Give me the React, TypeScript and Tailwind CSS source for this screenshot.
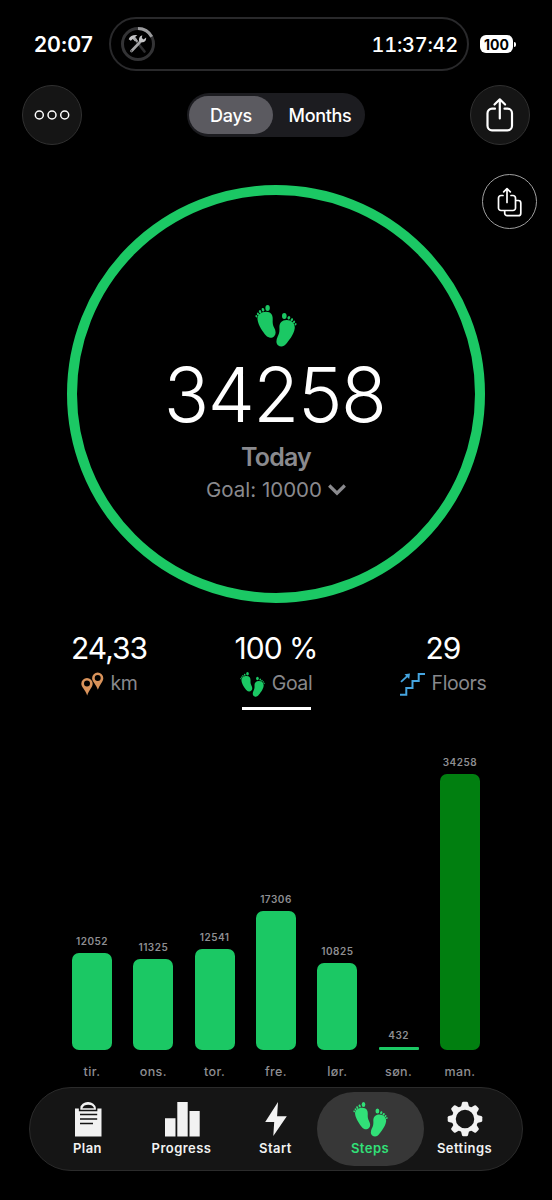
import type { ReactNode } from "react";

const stepsData = [
  { day: "tir.", steps: 12052 },
  { day: "ons.", steps: 11325 },
  { day: "tor.", steps: 12541 },
  { day: "fre.", steps: 17306 },
  { day: "lør.", steps: 10825 },
  { day: "søn.", steps: 432 },
  { day: "man.", steps: 34258 },
];

const maxSteps = 34258;
const maxHeight = 276;

const Feet = ({ className }: { className: string }) => (
  <svg viewBox="0 0 42 42" fill="currentColor" className={className}>
    <path d="M2.500 14.500C1.900 9.600 6.300 6.800 11 6.800c5 0 7 3.400 6.700 7.600-.2 3.800.1 5.600 1.500 8.300 1.700 3.200 2.100 6.300 0 8.500-2.200 2.200-5.900 2.100-8.200-.6C8.300 27.400 3.300 20.600 2.500 14.500Z" />
    <ellipse cx="12.600" cy="3" rx="2.200" ry="3" />
    <ellipse cx="8" cy="4.800" rx="1.300" ry="1.800" transform="rotate(-20 8 4.800)" />
    <ellipse cx="5.100" cy="6.700" rx="1.200" ry="1.600" transform="rotate(-25 5.100 6.700)" />
    <ellipse cx="3" cy="8.900" rx="1" ry="1.400" transform="rotate(-30 3 8.900)" />
    <ellipse cx="1.400" cy="11.200" rx=".9" ry="1.200" transform="rotate(-30 1.400 11.200)" />
    <path d="M39.700 23.400C40.300 18.400 36.600 15.200 31.800 15.100c-5-.1-7.600 3.200-7.400 7.700.2 4.400-.3 5.800-1.700 8.700-1.600 3.400-1.900 6.700.3 8.700 2.300 2 6 1.700 8-1.100 2.200-3.100 7.800-9.200 8.700-15.700Z" />
    <ellipse cx="29.300" cy="10.900" rx="2.300" ry="3" />
    <ellipse cx="33.900" cy="12.800" rx="1.300" ry="1.800" transform="rotate(22 33.900 12.800)" />
    <ellipse cx="36.800" cy="14.700" rx="1.200" ry="1.600" transform="rotate(28 36.800 14.700)" />
    <ellipse cx="39" cy="16.900" rx="1" ry="1.400" transform="rotate(30 39 16.900)" />
    <ellipse cx="40.600" cy="19.300" rx=".9" ry="1.200" transform="rotate(30 40.600 19.300)" />
  </svg>
);

const ToolsIcon = () => (
  <svg viewBox="0 0 36 36" fill="none" className="w-9 h-9">
    <circle cx="18" cy="18" r="15.500" stroke="#333335" strokeWidth="3" />
    <path d="M18 2.500a15.500 15.500 0 0 1 13.700 8.300" stroke="#9b9b9d" strokeWidth="3" />
    <path d="M17 16l7.500 9.500" stroke="#2d2d2f" strokeWidth="2.600" strokeLinecap="round" />
    <path d="M21.500 14.500L11.500 25" stroke="#a5a5a7" strokeWidth="2.600" strokeLinecap="round" />
    <path d="M19.700 15.800c-1.500-2.500-.4-5.600 2.600-6.600l-.5 2.900 1.800 1.300 2.500-2c.5 3.200-2.100 5.900-6.400 4.400Z" fill="#c4c4c6" />
    <path d="M8.700 13.200c1.300-3.600 4.300-4.500 8.600-4.200l-2.200 2 2 2.500-2 1.900-2.300-2.400-2 1.800Z" fill="#c4c4c6" />
    <path d="M14 12l3.500 3.800" stroke="#a5a5a7" strokeWidth="2" />
    <circle cx="11.700" cy="24.900" r=".6" fill="#222" />
  </svg>
);

const MoreIcon = () => (
  <svg viewBox="0 0 36 12" fill="none" stroke="white" strokeWidth="1.500" className="h-3 w-9">
    <circle cx="5.300" cy="6" r="4" />
    <circle cx="18" cy="6" r="4" />
    <circle cx="30.700" cy="6" r="4" />
  </svg>
);

const ShareIcon = () => (
  <svg viewBox="0 0 28 36" fill="none" stroke="white" strokeWidth="2.200" strokeLinecap="round" strokeLinejoin="round" className="w-7 h-9">
    <path d="M9 11.700H6a4.500 4.500 0 0 0-4.500 4.500v12.600A4.500 4.500 0 0 0 6 33.300h15.500a4.500 4.500 0 0 0 4.500-4.500V16.200a4.500 4.500 0 0 0-4.500-4.500H18.500" />
    <path d="M13.800 21.500V2.500M8.500 7.500l5.300-5.200 5.300 5.200" />
  </svg>
);

const ShareCopyIcon = () => (
  <svg viewBox="0 0 26 30" fill="none" stroke="white" strokeWidth="1.700" strokeLinecap="round" strokeLinejoin="round" className="w-[26px] h-[30px]">
    <path d="M6 8.500H4a2.500 2.500 0 0 0-2.500 2.500v10A2.500 2.500 0 0 0 4 23.500h12a2.500 2.500 0 0 0 2.500-2.500V11A2.500 2.500 0 0 0 16 8.500h-2" />
    <path d="M10 15.500V2M6.700 4.900L10 1.700l3.300 3.200" />
    <path d="M19 13.500h2.300a2.500 2.500 0 0 1 2.500 2.500v10.200a2.500 2.500 0 0 1-2.500 2.500H10.200a2.500 2.500 0 0 1-2.500-2.500v-2.400" />
  </svg>
);

const PinsIcon = () => (
  <svg viewBox="0 0 23 24" fill="#d9935b" fillRule="evenodd" className="w-[23px] h-6">
    <path d="M6 6a5.700 5.700 0 0 1 5.700 5.700C11.700 15 8 18 6.200 23.500 4.500 18 .3 15 .3 11.700A5.700 5.700 0 0 1 6 6Zm0 2.600a3 3 0 1 0 0 6 3 3 0 0 0 0-6Z" />
    <path d="M16.700.6a5.600 5.600 0 0 1 5.600 5.600c0 3.300-3.600 6.300-5.400 11.600-1.700-5.300-5.800-8.300-5.800-11.600A5.600 5.600 0 0 1 16.700.6Zm0 2.500a3 3 0 1 0 0 6 3 3 0 0 0 0-6Z" />
  </svg>
);

const StairsIcon = () => (
  <svg viewBox="0 0 25 24" fill="none" stroke="#45a5e0" strokeWidth="2" className="w-[25px] h-6">
    <path d="M0 22.700h6.300v-6.800h6.200V9h6.200V2H25" />
    <path d="M1 9.800L8 3.500" strokeWidth="1.800" />
    <path d="M4.500 2.300L10 1.500 9.200 7Z" fill="#45a5e0" stroke="none" />
  </svg>
);

const PlanIcon = () => (
  <svg viewBox="0 0 28 36" className="w-7 h-9">
    <path d="M1 7.500h4.800A8 8 0 0 1 14 1a8 8 0 0 1 8.200 6.500H27.500v28H1Z" fill="#f2f2f2" />
    <path d="M8.300 7.300a6.200 5 0 0 1 11.800 0Z" fill="#151515" />
    <path d="M5.600 5.800v3.700h17V5.800M6 13.500h17.200M6 18h17.200M6 22.500h13" stroke="#151515" strokeWidth="1.500" fill="none" />
  </svg>
);

const ProgressIcon = () => (
  <svg viewBox="0 0 36 36" fill="#f2f2f2" className="w-9 h-9">
    <path d="M1 17.200h10.500v18.300H1ZM13.300 1h10.400v34.500H13.300ZM25.500 10H35.700v25.500H25.500Z" />
  </svg>
);

const StartIcon = () => (
  <svg viewBox="0 0 24 36" fill="#f2f2f2" className="w-6 h-9">
    <path d="M14 1L1.200 21H10.200L9.300 35 22.800 15.200H13.100Z" />
  </svg>
);

const GearIcon = () => (
  <svg viewBox="-18 -18 36 36" className="w-9 h-9">
    {[0, 45, 90, 135, 180, 225, 270, 315].map((deg) => (
      <path key={deg} d="M-4.300-11L-3-16.200Q-2.700-17.300-1.700-17.300H1.700Q2.700-17.300 3-16.200L4.300-11Z" fill="#f2f2f2" transform={`rotate(${deg})`} />
    ))}
    <circle r="11.200" fill="none" stroke="#f2f2f2" strokeWidth="3.900" />
  </svg>
);

const tabs = [
  { title: "Plan", icon: <PlanIcon /> },
  { title: "Progress", icon: <ProgressIcon /> },
  { title: "Start", icon: <StartIcon /> },
  { title: "Steps", icon: <Feet className="w-[35px] h-[35px]" /> },
  { title: "Settings", icon: <GearIcon /> },
];

const Stat = ({ value, label, icon, active }: { value: string; label: string; icon: ReactNode; active?: boolean }) => (
  <div className="flex w-[167px] flex-col items-center">
    <div className="text-[30px] leading-9 tracking-[-1px] whitespace-nowrap">{value}</div>
    <div className="flex h-9 items-center gap-[7px] text-[19.500px] tracking-[-0.4px] text-[#88888c]">
      {icon}
      <span>{label}</span>
    </div>
    {active && <div className="mt-[5px] h-[3px] w-[69px] bg-white"></div>}
  </div>
);

const StatusBar = () => (
  <div className="flex h-[54px] items-center">
    <div className="w-[109px] pt-[2px] pl-[34px] text-[21px] font-semibold tracking-[-0.1px]">20:07</div>
    <div className="flex h-[54px] w-[360px] items-center justify-between rounded-full border-2 border-[#29292b] pr-[9px] pl-[9px]">
      <ToolsIcon />
      <span className="pt-px text-[20px] font-medium tracking-[-0.25px] tabular-nums">11:37:42</span>
    </div>
    <div className="ml-[11px] flex h-[18px] w-[33px] items-center justify-center rounded-[6px] bg-white text-[14px] font-bold text-black">
      100
    </div>
    <div className="ml-[1px] h-[5px] w-[2px] rounded-r-full bg-white"></div>
  </div>
);

const TabBar = () => (
  <div className="mx-[29px] flex h-[84px] items-center justify-center rounded-full border border-[#2b2b2b] bg-[#151515]">
    {tabs.map((tab) => (
      <div
        key={tab.title}
        className={
          tab.title === "Steps"
            ? "mx-[-6px] flex h-[74px] w-[107px] flex-col items-center rounded-full bg-[#373737] pt-[9px] text-[#31e078]"
            : "flex h-[74px] w-[94px] flex-col items-center pt-[9px] text-[#f2f2f2]"
        }
      >
        <div className="flex h-9 items-center">{tab.icon}</div>
        <div className="mt-[1px] text-[13px] leading-5 font-semibold tracking-[0.45px]">{tab.title}</div>
      </div>
    ))}
  </div>
);

export default function App() {
  return (
    <div className="flex h-[1200px] w-[552px] flex-col overflow-hidden bg-black pt-[17px] font-['Inter',sans-serif] text-white">
      <StatusBar />

      <div className="mt-[14px] flex h-[60px] items-center justify-between px-[22px]">
        <div className="flex h-[60px] w-[60px] items-center justify-center rounded-full border border-[#303030] bg-[#151515]">
          <MoreIcon />
        </div>
        <div className="flex h-[44px] w-[178px] items-center rounded-full bg-[#1c1c20] p-[2px] text-[18px] font-medium tracking-[-0.3px]">
          <div className="flex h-[38px] w-[84px] items-center justify-center rounded-full bg-[#5b5a60]">Days</div>
          <div className="flex flex-1 items-center justify-center pl-[4px]">Months</div>
        </div>
        <div className="flex h-[60px] w-[60px] items-center justify-center rounded-full border border-[#303030] bg-[#151515]">
          <ShareIcon />
        </div>
      </div>

      <div className="relative mt-[40px] flex justify-center">
        <div className="flex h-[418px] w-[418px] flex-col items-center rounded-full border-[10px] border-[#1bc864] pt-[110px]">
          <Feet className="h-[42px] w-[42px] text-[#1bc864]" />
          <div className="mt-[6px] mr-[3px] text-[75px] leading-[84px] font-light tracking-[-1.500px]">34258</div>
          <div className="mt-[4px] text-[25px] leading-8 font-semibold tracking-[-0.8px] text-[#8a8a8e]">Today</div>
          <div className="mt-px flex items-center gap-[6px] text-[20.500px] leading-8 text-[#8a8a8e]">
            <span>Goal: 10000</span>
            <svg viewBox="0 0 18 12" fill="none" stroke="currentColor" strokeWidth="3.200" className="h-3 w-[18px]">
              <path d="M1.200 1.500L9 9.200l7.800-7.700" />
            </svg>
          </div>
        </div>
        <div className="absolute top-[-11px] right-[15px] flex h-[55px] w-[55px] items-center justify-center rounded-full border border-[#a0a0a0]">
          <ShareCopyIcon />
        </div>
      </div>

      <div className="mt-[27px] flex h-[80px] justify-center">
        <Stat value="24,33" label="km" icon={<PinsIcon />} />
        <Stat value="100 %" label="Goal" icon={<Feet className="h-[25px] w-[25px] text-[#1bc864]" />} active />
        <Stat value="29" label="Floors" icon={<StairsIcon />} />
      </div>

      <div className="flex h-[340px] items-end justify-between px-[72px]">
        {stepsData.map((item) => (
          <div key={item.day} className="flex w-[40px] flex-col items-center">
            <div className="mb-[5px] text-[10px] leading-[14px] font-semibold tracking-[0.5px] text-[#8e8e92]">{item.steps}</div>
            <div
              className={
                item.steps === maxSteps
                  ? "w-full rounded-[7px] bg-[#017f10]"
                  : item.steps < 1000
                    ? "w-full rounded-[1px] bg-[#1bc864]"
                    : "w-full rounded-[7px] bg-[#1bc864]"
              }
              style={{ height: (item.steps / maxSteps) * maxHeight }}
            ></div>
          </div>
        ))}
      </div>
      <div className="mt-3 mb-[5px] flex justify-between px-[72px] text-[12.500px] leading-5 font-medium tracking-[0.4px] text-[#8e8e92]">
        {stepsData.map((item) => (
          <div key={item.day} className="flex w-[40px] justify-center">
            {item.day}
          </div>
        ))}
      </div>

      <TabBar />
    </div>
  );
}
